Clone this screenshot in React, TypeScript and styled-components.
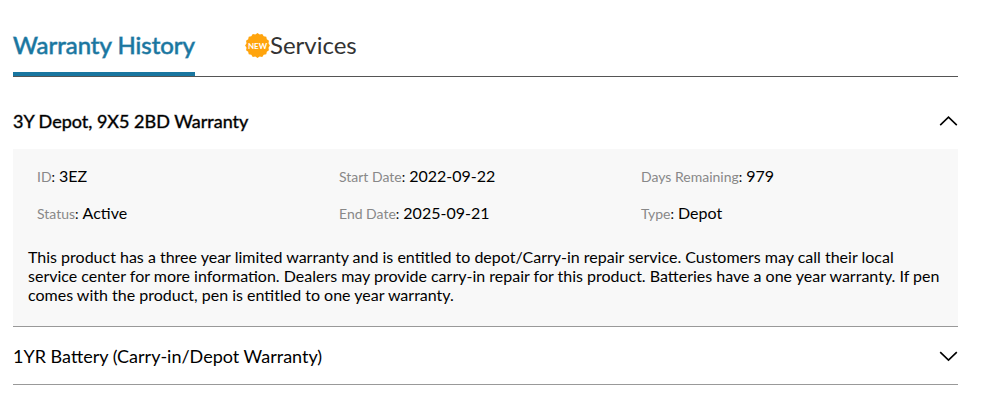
import React, { useState } from "react";
import styled, { createGlobalStyle } from "styled-components";

const GlobalStyle = createGlobalStyle`
  * { box-sizing: border-box; }
  body { margin: 0; background: #fff; color: #000; font-family: Lato, "Liberation Sans", sans-serif; }
  button { font-family: inherit; color: inherit; }
`;

const Page = styled.main`
  padding: 24px 25px 0 13px;
`;

const Tabs = styled.div`
  display: flex;
  gap: 50px;
  border-bottom: 1px solid #555;
`;

const Tab = styled.button<{ $active?: boolean }>`
  display: flex;
  align-items: center;
  height: 52px;
  padding: 0 0 6px;
  border: 0;
  border-bottom: 4px solid ${(p) => (p.$active ? "#1976a0" : "transparent")};
  background: none;
  color: ${(p) => (p.$active ? "#1976a0" : "#333")};
  font-size: 24px;
  font-weight: 400;
  -webkit-text-stroke: ${(p) => (p.$active ? "1px rgba(25, 118, 160, 0.65)" : "0")};
  line-height: 30px;
  white-space: nowrap;
  cursor: pointer;
`;

const Section = styled.section`
  border-bottom: 1px solid #999;
`;

const Heading = styled.h2`
  margin: 0;
  font-size: 18px;
`;

const Toggle = styled.button<{ $bold?: boolean }>`
  display: flex;
  align-items: center;
  justify-content: space-between;
  width: 100%;
  padding: ${(p) => (p.$bold ? "32px 0 15px" : "17px 0 15px")};
  border: 0;
  background: none;
  font-size: 18px;
  font-weight: 400;
  -webkit-text-stroke: ${(p) => (p.$bold ? "1px rgba(0, 0, 0, 0.4)" : "0")};
  line-height: 25px;
  text-align: left;
  cursor: pointer;
`;

const Panel = styled.div`
  padding: 15px 15px 22px;
  background: #f8f8f8;
`;

const Facts = styled.dl`
  display: grid;
  grid-template-columns: repeat(3, 1fr);
  row-gap: 12px;
  margin: 0 0 21px 9px;
`;

const Fact = styled.div`
  display: flex;
  align-items: baseline;
  line-height: 24px;
`;

const Label = styled.dt`
  margin-right: 4px;
  font-size: 14px;
`;

const LabelText = styled.span`
  color: #888;
`;

const Value = styled.dd`
  margin: 0;
  font-size: 16px;
`;

const Description = styled.p`
  margin: 0;
  font-size: 16px;
  line-height: 19px;
`;

const BadgeIcon = styled.svg`
  flex: none;
`;

const BadgeText = styled.text`
  font-family: Lato, sans-serif;
  font-size: 8px;
  font-weight: 700;
  fill: #fff;
`;

const BADGE_POINTS = Array.from({ length: 32 }, (_, i) => {
  const angle = (i * Math.PI) / 16;
  const radius = i % 2 === 0 ? 12.4 : 11.2;
  return `${(12.5 + radius * Math.sin(angle)).toFixed(2)},${(12.5 - radius * Math.cos(angle)).toFixed(2)}`;
}).join(" ");

const NewBadge = () => (
  <BadgeIcon width="25" height="25" viewBox="0 0 25 25" aria-hidden="true">
    <polygon points={BADGE_POINTS} fill="#ffa40d" />
    <BadgeText x="12.5" y="15.5" textAnchor="middle">NEW</BadgeText>
  </BadgeIcon>
);

const Chevron = ({ up }: { up?: boolean }) => (
  <svg width="19" height="13" viewBox="0 0 19 13" fill="none" stroke="#000" strokeWidth="1.6" aria-hidden="true">
    <path d={up ? "M1.2 10.2 9.5 2.2 17.8 10.2" : "M1.2 2.2 9.5 10.2 17.8 2.2"} />
  </svg>
);

const facts = [
  ["ID", "3EZ"],
  ["Start Date", "2022-09-22"],
  ["Days Remaining", "979"],
  ["Status", "Active"],
  ["End Date", "2025-09-21"],
  ["Type", "Depot"],
];

export default function App() {
  const [open, setOpen] = useState(true);
  return (
    <Page>
      <GlobalStyle />
      <Tabs role="tablist">
        <Tab role="tab" aria-selected $active>Warranty History</Tab>
        <Tab role="tab" aria-selected={false}><NewBadge />Services</Tab>
      </Tabs>
      <Section>
        <Heading>
          <Toggle $bold aria-expanded={open} onClick={() => setOpen(!open)}>
            3Y Depot, 9X5 2BD Warranty<Chevron up={open} />
          </Toggle>
        </Heading>
        {open && (
          <Panel>
            <Facts>
              {facts.map(([label, value]) => (
                <Fact key={label}>
                  <Label><LabelText>{label}</LabelText>:</Label>
                  <Value>{value}</Value>
                </Fact>
              ))}
            </Facts>
            <Description>
              This product has a three year limited warranty and is entitled to depot/Carry-in repair service. Customers may call their local service center for more information. Dealers may provide carry-in repair for this product. Batteries have a one year warranty. If pen comes with the product, pen is entitled to one year warranty.
            </Description>
          </Panel>
        )}
      </Section>
      <Section>
        <Heading>
          <Toggle aria-expanded={false}>1YR Battery (Carry-in/Depot Warranty)<Chevron /></Toggle>
        </Heading>
      </Section>
    </Page>
  );
}
